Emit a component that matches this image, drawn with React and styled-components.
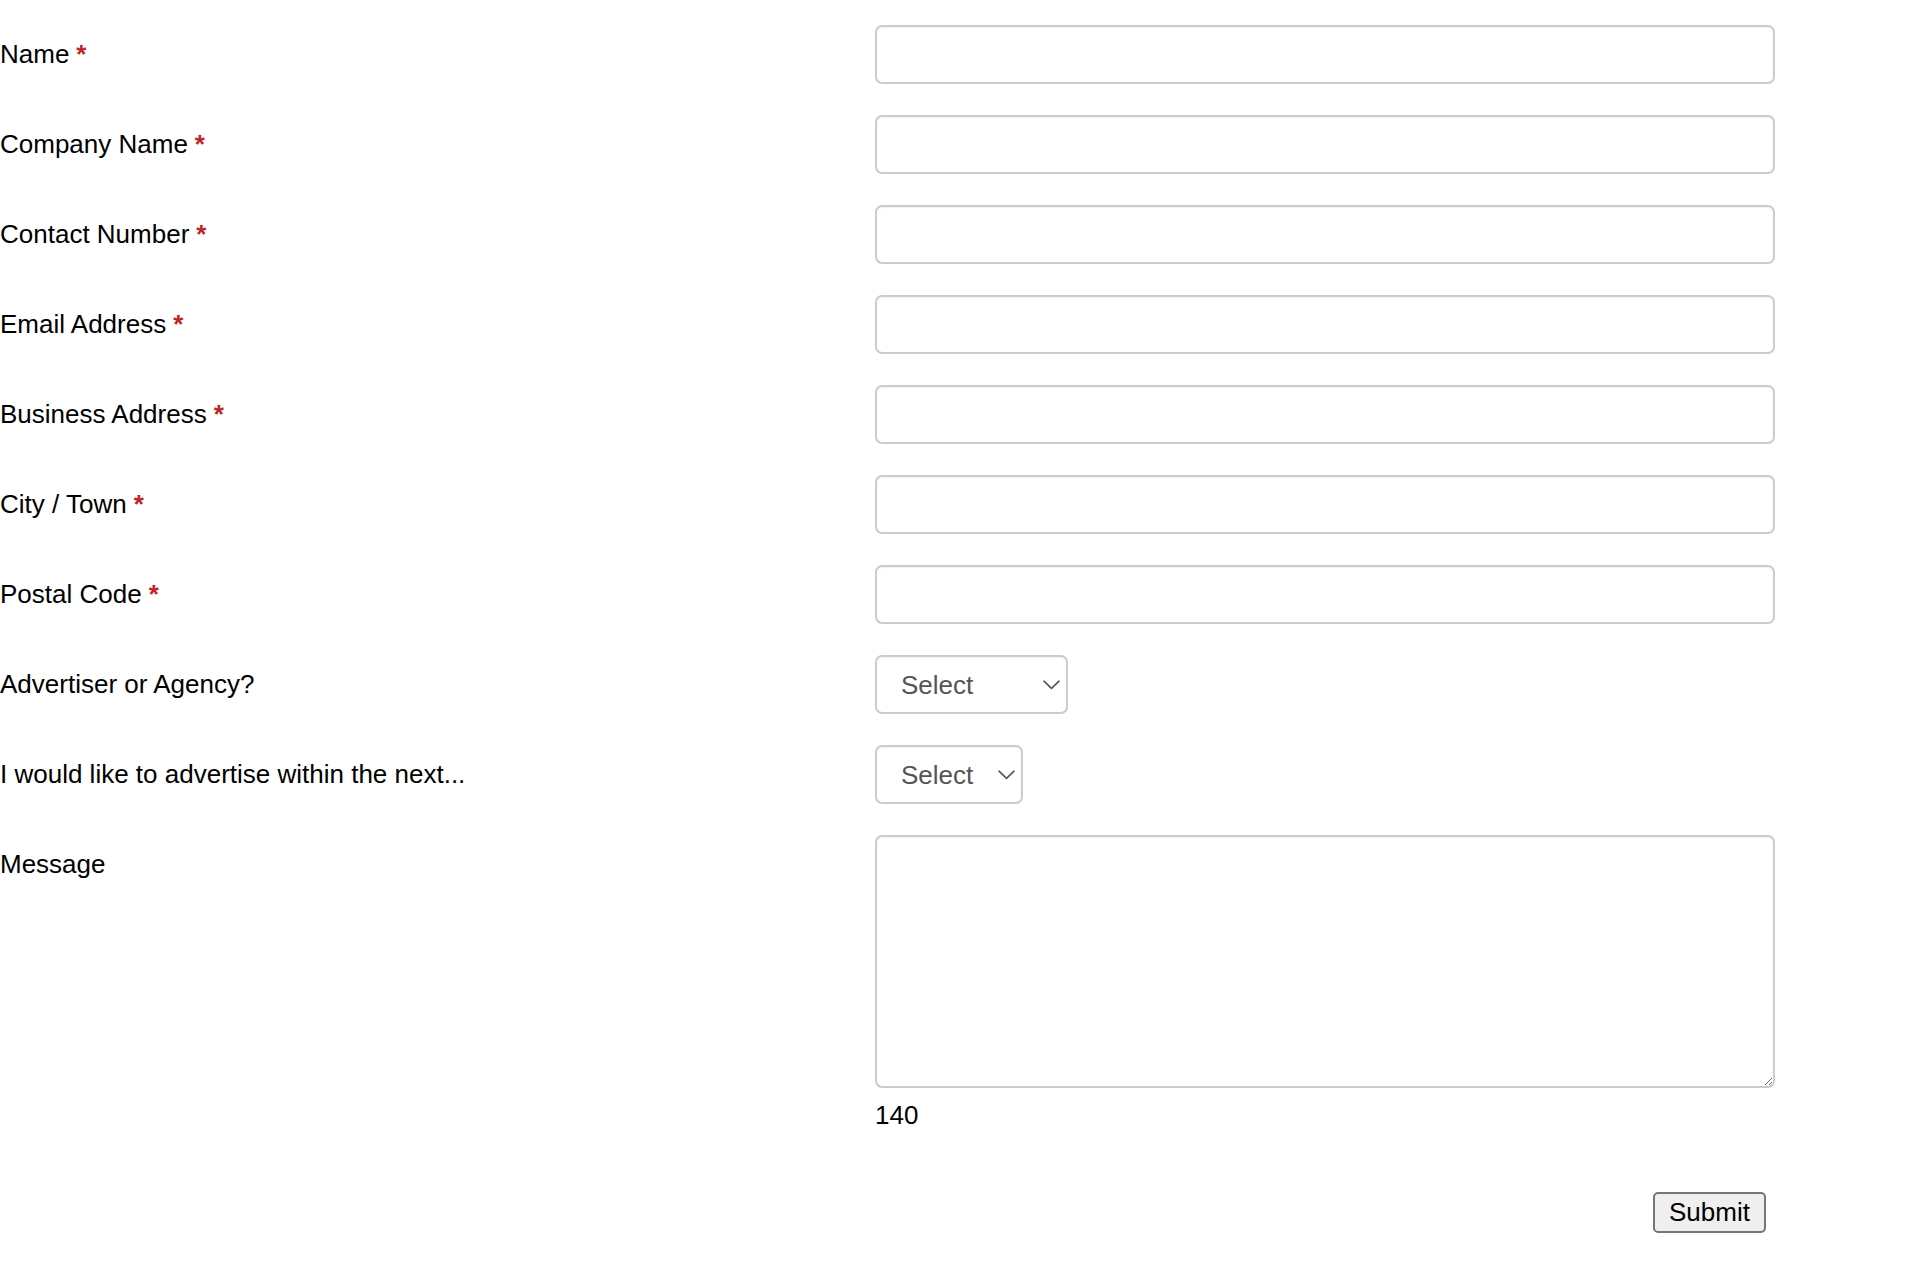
import React from 'react'
import styled, { createGlobalStyle } from 'styled-components'

const GlobalStyle = createGlobalStyle`
  body {
    margin: 0;
    background: #ffffff;
    font-family: "Liberation Sans", Arial, sans-serif;
    color: #000;
  }
`

const fields = [
  { label: 'Name', required: true },
  { label: 'Company Name', required: true },
  { label: 'Contact Number', required: true },
  { label: 'Email Address', required: true },
  { label: 'Business Address', required: true },
  { label: 'City / Town', required: true },
  { label: 'Postal Code', required: true },
]

const selects = [
  { label: 'Advertiser or Agency?', width: 193 },
  { label: 'I would like to advertise within the next...', width: 148 },
]

function Chevron() {
  return (
    <svg width="17" height="10" viewBox="0 0 17 10" fill="none">
      <path d="M1 1.2 L8.5 8.4 L16 1.2" stroke="#555" strokeWidth="1.6" strokeLinecap="round" strokeLinejoin="round" />
    </svg>
  )
}

function App() {
  return (
    <>
      <GlobalStyle />
      <Form onSubmit={(e) => e.preventDefault()}>
        <Grid>
          {fields.map((f) => (
            <React.Fragment key={f.label}>
              <Label>
                {f.label}
                {f.required && <Star>*</Star>}
              </Label>
              <Input type="text" />
            </React.Fragment>
          ))}
          {selects.map((s) => (
            <React.Fragment key={s.label}>
              <Label>{s.label}</Label>
              <SelectWrap $width={s.width}>
                <Select defaultValue="">
                  <option value="">Select</option>
                </Select>
                <Arrow>
                  <Chevron />
                </Arrow>
              </SelectWrap>
            </React.Fragment>
          ))}
          <Label>Message</Label>
          <div>
            <TextArea />
            <Counter>140</Counter>
          </div>
        </Grid>
        <Footer>
          <SubmitButton type="submit">Submit</SubmitButton>
        </Footer>
      </Form>
    </>
  )
}

const Form = styled.form`
  width: 1775px;
  padding-top: 25px;
`

const Grid = styled.div`
  display: grid;
  grid-template-columns: 875px 900px;
  row-gap: 31px;
  align-items: start;
`

const Label = styled.label`
  display: block;
  padding-top: 14px;
  font-size: 26px;
  line-height: 30px;
  white-space: nowrap;
`

const Star = styled.span`
  margin-left: 7px;
  color: #c8211f;
  font-weight: bold;
`

const fieldBase = `
  box-sizing: border-box;
  border: 2px solid #cccccc;
  border-radius: 7px;
  background: #ffffff;
  box-shadow: inset 0 1px 2px rgba(0, 0, 0, 0.06);
  font-family: "Liberation Sans", Arial, sans-serif;
  font-size: 26px;
  outline: none;
`

const Input = styled.input`
  ${fieldBase}
  display: block;
  width: 900px;
  height: 59px;
  padding: 0 24px;
`

const SelectWrap = styled.div`
  position: relative;
  width: ${(p) => p.$width}px;
  height: 59px;
`

const Select = styled.select`
  ${fieldBase}
  appearance: none;
  -webkit-appearance: none;
  width: 100%;
  height: 100%;
  padding: 0 40px 0 24px;
  color: #555555;
`

const Arrow = styled.span`
  position: absolute;
  right: 8px;
  top: 25px;
  display: flex;
  pointer-events: none;
`

const TextArea = styled.textarea`
  ${fieldBase}
  display: block;
  width: 900px;
  height: 253px;
  padding: 12px 24px;
  resize: both;
`

const Counter = styled.div`
  margin-top: 12px;
  font-size: 26px;
  line-height: 30px;
`

const Footer = styled.div`
  display: flex;
  justify-content: flex-end;
  padding: 62px 9px 0 0;
`

const SubmitButton = styled.button`
  box-sizing: border-box;
  width: 113px;
  height: 41px;
  padding: 0;
  border: 2px solid #767676;
  border-radius: 5px;
  background: #efefef;
  font-family: "Liberation Sans", Arial, sans-serif;
  font-size: 26px;
  color: #000;
`

export default App
